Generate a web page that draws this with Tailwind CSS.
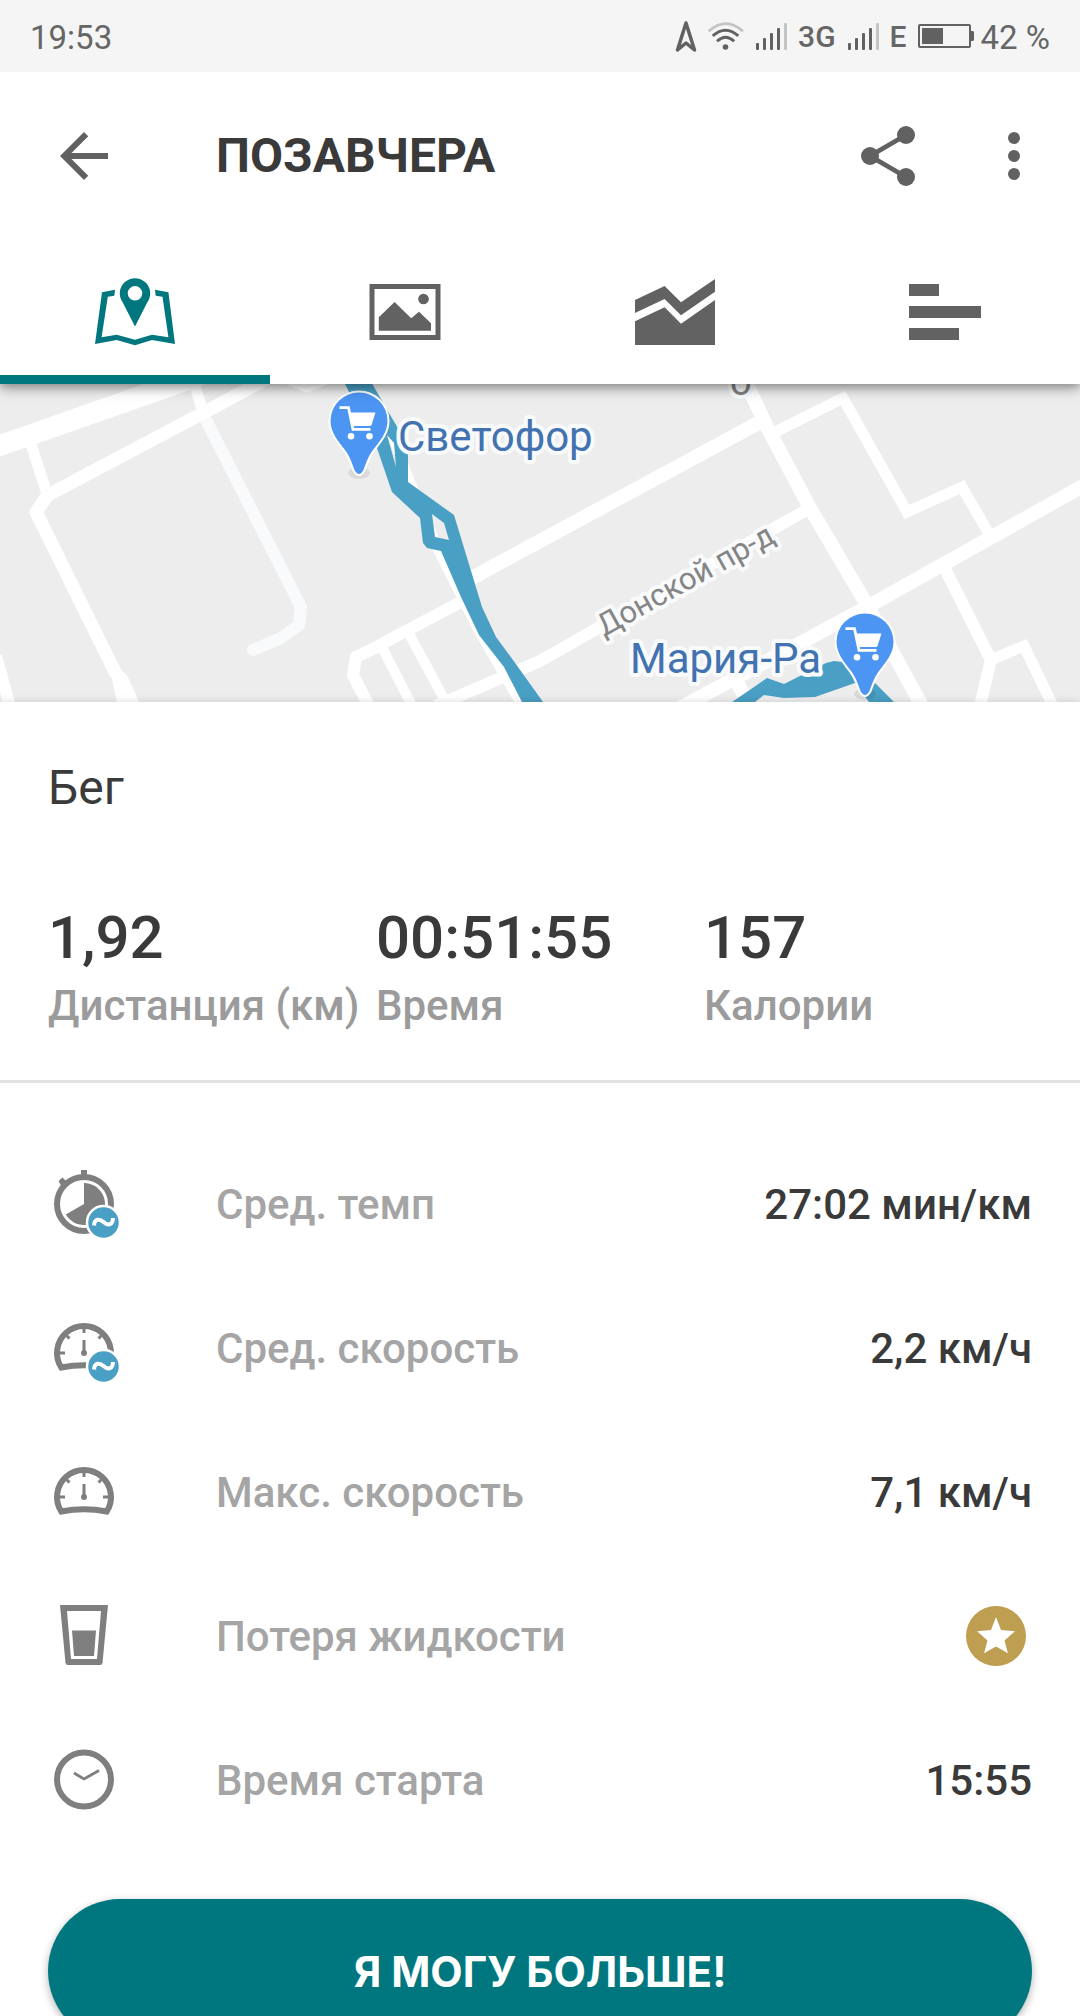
<!DOCTYPE html>
<html lang="ru">
  <head>
    <meta charset="UTF-8" />
    <meta name="viewport" content="width=device-width, initial-scale=1.0" />
    <title>Тренировка – Бег</title>
    <script src="https://cdn.jsdelivr.net/npm/@tailwindcss/browser@4"></script>
  </head>
  <body
    class="flex flex-col h-screen overflow-hidden bg-white font-['Roboto',sans-serif] text-[#3a3a3a]"
  >
    <!-- Status bar -->
    <div
      class="relative z-20 flex shrink-0 items-center h-[72px] pt-1 px-[30px] bg-[#f5f5f5] text-[33px] text-[#666666]"
    >
      <span>19:53</span>
      <div class="ml-auto flex items-center gap-[11px]">
        <svg class="w-[22px] h-9" viewBox="0 0 22 36" fill="none" stroke="#616161" stroke-width="3.5" stroke-linejoin="round">
          <path d="M11 3L19.5 30L11 23L2.5 30Z" />
        </svg>
        <svg class="w-9 h-9" viewBox="0 0 36 36" fill="none" stroke="#616161" stroke-width="2.8">
          <path d="M.7 11.3Q17.8-4 35 11.3" stroke="#c4c4c4" />
          <path d="M4.7 15.9Q17.5 4.5 30.3 15.9" />
          <path d="M9 21.3Q17.5 13 26.2 21.3" />
          <circle cx="17.5" cy="27" r="2.8" fill="#616161" stroke="none" />
        </svg>
        <svg class="w-8 h-9" viewBox="0 0 32 36" fill="#616161">
          <rect x="1" y="23" width="3" height="7" rx="1" />
          <rect x="8" y="18" width="3" height="12" rx="1" />
          <rect x="15" y="13" width="3" height="17" rx="1" />
          <rect x="22" y="8" width="3" height="22" rx="1" />
          <rect x="29" y="3" width="3" height="27" rx="1" fill="#c4c4c4" />
        </svg>
        <span class="pb-1 text-[30px] font-medium">3G</span>
        <svg class="w-8 h-9" viewBox="0 0 32 36" fill="#616161">
          <rect x="1" y="23" width="3" height="7" rx="1" />
          <rect x="8" y="18" width="3" height="12" rx="1" />
          <rect x="15" y="13" width="3" height="17" rx="1" />
          <rect x="22" y="8" width="3" height="22" rx="1" />
          <rect x="29" y="3" width="3" height="27" rx="1" fill="#c4c4c4" />
        </svg>
        <span class="pb-1 text-[30px] font-medium">E</span>
        <div class="flex items-center gap-[7px]">
          <svg class="w-14 h-9" viewBox="0 0 56 36" fill="#616161">
            <rect x="1" y="5" width="51" height="22" rx="1" fill="none" stroke="#616161" stroke-width="2" />
            <rect x="4" y="8" width="21" height="16" />
            <path d="M53 11h2l1 1v8l-1 1h-2z" />
          </svg>
          <span>42 %</span>
        </div>
      </div>
    </div>

    <!-- App bar + tabs -->
    <header
      class="relative z-10 shrink-0 bg-white shadow-[0_3px_12px_rgba(0,0,0,0.5)]"
    >
      <div class="flex items-center h-[168px] pl-12 pr-[30px]">
        <button type="button" aria-label="Назад">
          <svg class="size-[72px]" viewBox="0 0 24 24" fill="#616161">
            <path d="M20 11H7.83l5.59-5.59L12 4l-8 8 8 8 1.41-1.41L7.83 13H20v-2z" />
          </svg>
        </button>
        <h1 class="ml-24 text-5xl font-bold">ПОЗАВЧЕРА</h1>
        <div class="ml-auto flex gap-[54px]">
          <button type="button" aria-label="Поделиться">
            <svg class="size-[72px]" viewBox="0 0 24 24" fill="#616161">
              <path d="M18 5L6 12l12 7" fill="none" stroke="#616161" stroke-width="1.6" />
              <circle cx="18" cy="5" r="3" />
              <circle cx="6" cy="12" r="3" />
              <circle cx="18" cy="19" r="3" />
            </svg>
          </button>
          <button type="button" aria-label="Ещё">
            <svg class="size-[72px]" viewBox="0 0 24 24" fill="#616161">
              <circle cx="12" cy="6" r="2" />
              <circle cx="12" cy="12" r="2" />
              <circle cx="12" cy="18" r="2" />
            </svg>
          </button>
        </div>
      </div>

      <nav class="grid grid-cols-4 h-36">
        <button type="button" aria-label="Карта" class="relative flex items-center justify-center">
          <svg class="size-20" viewBox="0 0 80 80" fill="#00777f">
            <path d="M7 20.3L20 17.7L19.3 23.7L12.8 24.7L6.6 65.3L21.7 62.7L40 67.7L57 62.7L73.4 65.3L67.5 24.7L60.7 23.7L60 17.7L73.4 20.3L80 72L57 68L40 73.3L21.7 68L0 72Z" />
            <path fill-rule="evenodd" d="M40 54.5L27.5 30A15.2 15.2 0 1 1 52.5 30ZM40 14a7.3 7.3 0 1 0 0 14.6a7.3 7.3 0 1 0 0-14.6z" />
          </svg>
          <span class="absolute inset-x-0 bottom-0 h-[9px] bg-[#00777f]"></span>
        </button>
        <button type="button" aria-label="Фото" class="flex items-center justify-center">
          <svg class="w-[72px] h-14" viewBox="0 0 72 56" fill="#616261">
            <rect x="3" y="2.5" width="66" height="51" fill="none" stroke="#616261" stroke-width="5" />
            <circle cx="54.5" cy="15" r="5.3" />
            <path d="M9.8 46.7V33.3L25.6 18L42.2 34.3L50 27.7L62 39.3V46.7Z" />
          </svg>
        </button>
        <button type="button" aria-label="Графики" class="flex items-center justify-center">
          <svg class="w-20 h-[66px]" viewBox="0 0 80 66" fill="#616261">
            <path d="M0 21L29.6 7L46 23.3L80 0V12.7L46 36.3L29.6 20L0 34Z" />
            <path d="M0 42.3L29.6 28.3L46 44.7L80 21V66H0Z" />
          </svg>
        </button>
        <button type="button" aria-label="Отрезки" class="flex items-center justify-center">
          <svg class="w-[72px] h-14" viewBox="0 0 72 56" fill="#616261">
            <rect width="30" height="12" />
            <rect y="22" width="72" height="12" />
            <rect y="44" width="50" height="12" />
          </svg>
        </button>
      </nav>
    </header>

    <main class="flex-1 min-h-0 overflow-hidden">
      <!-- Map -->
      <svg class="block w-full h-[318px] bg-[#ededed]" viewBox="0 0 1080 318" preserveAspectRatio="xMidYMid slice">
        <g id="roads" fill="none" stroke="#fff" stroke-linejoin="round">
          <path d="M205 34L301 223L299 241L281 254L253 266" stroke="#f8fafb" stroke-width="12" stroke-linecap="round" />
          <path d="M-10 65L230-19" stroke-width="21" />
          <path d="M29 54L48 113M193-4L205 34" stroke-width="11" />
          <path d="M272-8L205 28L48 111L36 128L116 290" stroke-width="13" />
          <path d="M110 286L117 283L127 291L139 318H117Z" fill="#fff" stroke="none" />
          <path d="M288-4L307 4L327-4" stroke-width="9" />
          <path d="M-4 272L10 322" stroke-width="12" />
          <path d="M461 218L389 256L377 263L356 273L353 291L369 322" stroke-width="12" />
          <path d="M382 263L412 322M408 248L448 322" stroke-width="10" />
          <path d="M436 322L540 277L810 124" stroke-width="12" />
          <path d="M455 203L540 157L762 37" stroke-width="14" />
          <path d="M392 50L410 98L440 170L478 245L520 318" stroke-width="10" />
          <path d="M744-6L766 41L810 124L867 221L922 322" stroke-width="14" />
          <path d="M777 47L843 14L907 128L962 103L989 150" stroke-width="11" stroke-linejoin="miter" />
          <path d="M1090 98L867 223L680 324M738 300L750 322" stroke-width="14" />
          <path d="M944 183L991 276L980 322" stroke-width="12" />
          <path d="M991 276L1024 262L1053 322" stroke-width="11" stroke-linejoin="miter" />
        </g>
        <g id="track" fill="#4a9fc4" fill-rule="evenodd">
          <path d="M343-4L370-4L389 29L399 46L408 63V98L454 131L482 223L496 253L513 276L543 318H522L504 283L479 251L461 213L441 167L427 164L423 159L420 134L392 108L377 64L360 30ZM387 51L394 59L396 83ZM432 130L444 139L449 156L435 153Z" />
          <path d="M732 318L757 301L767 294L784 300L826 279L834 277L850 279L865 289L894 318H869L855 299L815 313L784 314L764 311L755 318Z" />
        </g>
        <g font-family="Roboto, sans-serif" stroke="#f8fafb" stroke-width="8" stroke-linejoin="round" paint-order="stroke">
          <text x="730" y="11" font-size="38" fill="#808080">о</text>
          <text transform="translate(604 253) rotate(-29)" font-size="31" fill="#858585">Донской пр-д</text>
          <text x="398" y="67" font-size="42" fill="#4272b0">Светофор</text>
          <text x="630" y="289" font-size="42" fill="#4272b0">Мария-Ра</text>
        </g>
        <defs>
          <g id="shop">
            <ellipse cy="52" rx="11" ry="6" fill="#000" fill-opacity=".08" />
            <path d="M-28.5 0A28.5 28.5 0 1 1 28.5 0C28.5 12 20 21 14 29C9 36 7 42 4.5 49Q0 57-4.5 49C-7 42-9 36-14 29C-20 21-28.5 12-28.5 0Z" fill="#4c95f3" stroke="#fff" stroke-width="4" paint-order="stroke" />
            <path d="M-19.5-13.3H-10.5L-6 8.3H11.5" fill="none" stroke="#fff" stroke-width="2.8" />
            <path d="M-10-8.5H16.5L12.5 4Q12 5 10.5 5H-7Z" fill="#fff" />
            <circle cx="-8" cy="15.3" r="3.3" fill="#fff" />
            <circle cx="10.5" cy="15.3" r="3.3" fill="#fff" />
          </g>
        </defs>
        <use href="#shop" x="359" y="37" />
        <use href="#shop" x="865" y="258" />
      </svg>

      <!-- Summary -->
      <section
        class="relative px-12 pt-[58px] pb-[50px] bg-white border-b-[3px] border-[#e1e1e1] shadow-[0_0_8px_rgba(0,0,0,0.15)]"
      >
        <h2 class="text-5xl leading-[56px]">Бег</h2>
        <dl class="mt-[86px] grid grid-cols-3 font-medium whitespace-nowrap">
          <div class="flex flex-col-reverse gap-2">
            <dt class="text-[42px] leading-[48px] text-[#9b9b9b]">Дистанция (км)</dt>
            <dd class="text-6xl leading-[72px]">1,92</dd>
          </div>
          <div class="flex flex-col-reverse gap-2">
            <dt class="text-[42px] leading-[48px] text-[#9b9b9b]">Время</dt>
            <dd class="text-6xl leading-[72px]">00:51:55</dd>
          </div>
          <div class="flex flex-col-reverse gap-2">
            <dt class="text-[42px] leading-[48px] text-[#9b9b9b]">Калории</dt>
            <dd class="text-6xl leading-[72px]">157</dd>
          </div>
        </dl>
      </section>

      <!-- Details -->
      <dl class="relative px-12 pt-[49px] bg-white text-[42px] font-medium">
        <div class="flex items-center h-36">
          <svg class="size-[72px]" viewBox="0 0 72 72" fill="#7f7f7f">
            <circle cx="36" cy="36" r="27" fill="none" stroke="#7f7f7f" stroke-width="6" />
            <path d="M33 2h6v7h-6zM10.5 13l4-3.500l4 4l-5 5z" />
            <path d="M36 36V15A21 21 0 1 1 17.8 46.5Z" />
            <circle cx="55.5" cy="54.5" r="16.5" fill="#4a9fc4" stroke="#fff" stroke-width="2.5" />
            <path d="M46 57.5C46.5 50.5 51.5 50.5 55.5 54S64.5 58 65 50" fill="none" stroke="#fff" stroke-width="4" />
          </svg>
          <dt class="ml-24 text-[#a5a5a5]">Сред. темп</dt>
          <dd class="ml-auto">27:02 мин/км</dd>
        </div>
        <div class="flex items-center h-36">
          <svg class="size-[72px]" viewBox="0 0 72 72" fill="none" stroke="#7f7f7f" stroke-width="3">
            <path d="M13.2 55.5A27 27 0 1 1 58.8 55.5Q36 51 13.2 55.5Z" stroke-width="6" />
            <path d="M36 15v6M11 41h6M61 41h-6M17 22l4.5 4.5M55 22l-4.5 4.5M36 28v13" />
            <circle cx="36" cy="41" r="3" fill="#7f7f7f" stroke="none" />
            <circle cx="55.5" cy="54.5" r="16.5" fill="#4a9fc4" stroke="#fff" stroke-width="2.5" />
            <path d="M46 57.5C46.5 50.5 51.5 50.5 55.5 54S64.5 58 65 50" stroke="#fff" stroke-width="4" />
          </svg>
          <dt class="ml-24 text-[#a5a5a5]">Сред. скорость</dt>
          <dd class="ml-auto">2,2 км/ч</dd>
        </div>
        <div class="flex items-center h-36">
          <svg class="size-[72px]" viewBox="0 0 72 72" fill="none" stroke="#7f7f7f" stroke-width="3">
            <path d="M13.2 55.5A27 27 0 1 1 58.8 55.5Q36 51 13.2 55.5Z" stroke-width="6" />
            <path d="M36 15v6M11 41h6M61 41h-6M17 22l4.5 4.5M55 22l-4.5 4.5M36 28v13" />
            <circle cx="36" cy="41" r="3" fill="#7f7f7f" stroke="none" />
          </svg>
          <dt class="ml-24 text-[#a5a5a5]">Макс. скорость</dt>
          <dd class="ml-auto">7,1 км/ч</dd>
        </div>
        <div class="flex items-center h-36">
          <svg class="size-[72px]" viewBox="0 0 72 72" fill="#7f7f7f">
            <path fill-rule="evenodd" d="M12 5H60L54.5 63Q54.3 65 52 65H20Q17.7 65 17.5 63ZM19 11L23 59H49L53 11Z" />
            <path d="M24 30.5H48L46 56H26Z" />
          </svg>
          <dt class="ml-24 text-[#a5a5a5]">Потеря жидкости</dt>
          <dd class="ml-auto mr-1.5">
            <button type="button" aria-label="Премиум" class="block">
              <svg class="size-[60px]" viewBox="0 0 60 60">
                <circle cx="30" cy="30" r="30" fill="#be9e50" />
                <path fill="#fff" d="M30 11L35 24L49 25.3L38.5 34.5L42 47.3L30 40.5L18 47.3L21.5 34.5L11 25.3L25 24Z" />
              </svg>
            </button>
          </dd>
        </div>
        <div class="flex items-center h-36">
          <svg class="size-[72px]" viewBox="0 0 72 72" fill="none" stroke="#7f7f7f">
            <circle cx="36" cy="35.5" r="27" stroke-width="6" />
            <path d="M26 29L36 35L51 26.5" stroke-width="2.8" />
          </svg>
          <dt class="ml-24 text-[#a5a5a5]">Время старта</dt>
          <dd class="ml-auto">15:55</dd>
        </div>
      </dl>

      <div class="px-12 pt-[47px] pb-12">
        <button
          type="button"
          class="block w-full h-36 rounded-full bg-[#00777f] text-white text-[42px] font-bold font-['Inter',sans-serif] shadow-[0_3px_8px_rgba(0,0,0,0.3)]"
        >
          Я МОГУ БОЛЬШЕ!
        </button>
      </div>
    </main>
  </body>
</html>
